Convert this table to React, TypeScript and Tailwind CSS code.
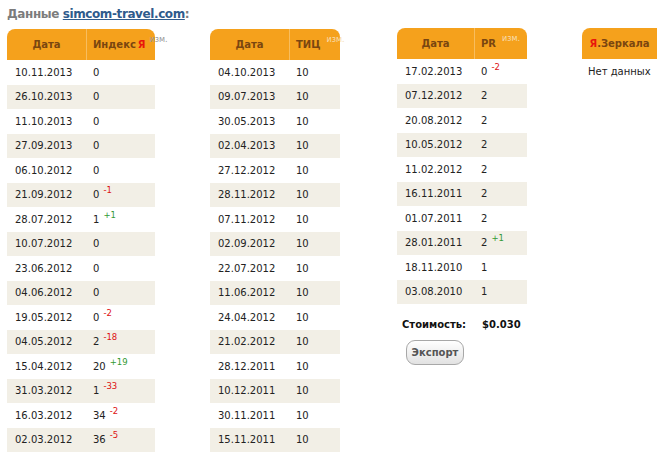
type Row = { date: string; value: string; diff?: string };

const yandex: Row[] = [
  { date: "10.11.2013", value: "0" },
  { date: "26.10.2013", value: "0" },
  { date: "11.10.2013", value: "0" },
  { date: "27.09.2013", value: "0" },
  { date: "06.10.2012", value: "0" },
  { date: "21.09.2012", value: "0", diff: "-1" },
  { date: "28.07.2012", value: "1", diff: "+1" },
  { date: "10.07.2012", value: "0" },
  { date: "23.06.2012", value: "0" },
  { date: "04.06.2012", value: "0" },
  { date: "19.05.2012", value: "0", diff: "-2" },
  { date: "04.05.2012", value: "2", diff: "-18" },
  { date: "15.04.2012", value: "20", diff: "+19" },
  { date: "31.03.2012", value: "1", diff: "-33" },
  { date: "16.03.2012", value: "34", diff: "-2" },
  { date: "02.03.2012", value: "36", diff: "-5" },
];

const tic: Row[] = [
  "04.10.2013",
  "09.07.2013",
  "30.05.2013",
  "02.04.2013",
  "27.12.2012",
  "28.11.2012",
  "07.11.2012",
  "02.09.2012",
  "22.07.2012",
  "11.06.2012",
  "24.04.2012",
  "21.02.2012",
  "28.12.2011",
  "10.12.2011",
  "30.11.2011",
  "15.11.2011",
].map((date) => ({ date, value: "10" }));

const pr: Row[] = [
  { date: "17.02.2013", value: "0", diff: "-2" },
  { date: "07.12.2012", value: "2" },
  { date: "20.08.2012", value: "2" },
  { date: "10.05.2012", value: "2" },
  { date: "11.02.2012", value: "2" },
  { date: "16.11.2011", value: "2" },
  { date: "01.07.2011", value: "2" },
  { date: "28.01.2011", value: "2", diff: "+1" },
  { date: "18.11.2010", value: "1" },
  { date: "03.08.2010", value: "1" },
];

function Rows({ rows, col1, col2 }: { rows: Row[]; col1: string; col2: string }) {
  return (
    <div>
      {rows.map((r, i) => (
        <div
          key={r.date}
          className={`flex h-[24.5px] items-center ${i % 2 === 1 ? "bg-[#f2efe6]" : "bg-white"}`}
        >
          <div className={`${col1} pl-2`}>{r.date}</div>
          <div className={`${col2} pl-[6px] flex items-start`}>
            <span>{r.value}</span>
            {r.diff && (
              <span
                className={`ml-[4px] -mt-[3px] text-[8.5px] ${
                  r.diff.startsWith("+") ? "text-[#339933]" : "text-[#dd1111]"
                }`}
              >
                {r.diff}
              </span>
            )}
          </div>
        </div>
      ))}
    </div>
  );
}

function Header({
  col1,
  col2,
  children,
}: {
  col1: string;
  col2: string;
  children: React.ReactNode;
}) {
  return (
    <div className="flex h-[31px] rounded-t-[8px] bg-[#f5a11c] font-bold text-[#7a4610]">
      <div className={`${col1} flex items-center justify-center border-r border-[#f8bd5e]`}>
        Дата
      </div>
      <div className={`${col2} flex items-center pl-[6px] whitespace-nowrap`}>{children}</div>
    </div>
  );
}

export default function App() {
  return (
    <div
      className="w-[671px] h-[460px] overflow-hidden bg-white text-[10px] text-[#222]"
      style={{ fontFamily: '"DejaVu Sans", Verdana, sans-serif' }}
    >
      <div className="pl-[7px] pt-[5px] h-[29px] text-[12px] tracking-[-0.4px] font-bold text-[#7c7c7c]">
        Данные{" "}
        <a href="#" className="text-[#2f5b8c] underline">
          simcom-travel.com
        </a>
        :
      </div>

      <div className="flex items-start pl-[7px]">
        {/* Индекс Яндекса */}
        <div className="w-[148px]">
          <Header col1="w-[80px]" col2="w-[68px]">
            Индекс <span className="ml-[2px] text-[#e8160c]">Я</span>
            <span className="relative -top-[5px] ml-[4px] text-[8px] font-normal text-[#999]">
              изм.
            </span>
          </Header>
          <Rows rows={yandex} col1="w-[80px]" col2="w-[68px]" />
        </div>

        {/* ТИЦ */}
        <div className="ml-[55px] w-[130px]">
          <Header col1="w-[80px]" col2="w-[50px]">
            ТИЦ
            <span className="relative -top-[5px] ml-[6px] text-[8px] font-normal text-[#f7dcae]">
              изм.
            </span>
          </Header>
          <Rows rows={tic} col1="w-[80px]" col2="w-[50px]" />
        </div>

        {/* PR */}
        <div className="ml-[57px] w-[130px] -mt-[1px]">
          <Header col1="w-[78px]" col2="w-[52px]">
            PR
            <span className="relative -top-[5px] ml-[6px] text-[8px] font-normal text-[#f7dcae]">
              изм.
            </span>
          </Header>
          <Rows rows={pr} col1="w-[78px]" col2="w-[52px]" />
          <div className="flex h-[28px] items-end font-bold text-[#111]">
            <div className="w-[78px] pl-[5px]">Стоимость:</div>
            <div className="pl-[7px]">$0.030</div>
          </div>
          <button className="ml-[9px] mt-[8px] h-[25px] w-[58px] rounded-[9px] border border-[#a8a8a8] bg-gradient-to-b from-white to-[#e2e2e2] font-bold text-[#555]">
            Экспорт
          </button>
        </div>

        {/* Зеркала */}
        <div className="ml-[55px] w-[75px] -mt-[1px]">
          <div className="flex h-[31px] items-center justify-center rounded-tl-[8px] bg-[#f5a11c] font-bold text-[#7a4610]">
            <span className="text-[#e8160c]">Я</span>.Зеркала
          </div>
          <div className="flex h-[24.5px] items-center pl-[6px]">Нет данных</div>
        </div>
      </div>
    </div>
  );
}
